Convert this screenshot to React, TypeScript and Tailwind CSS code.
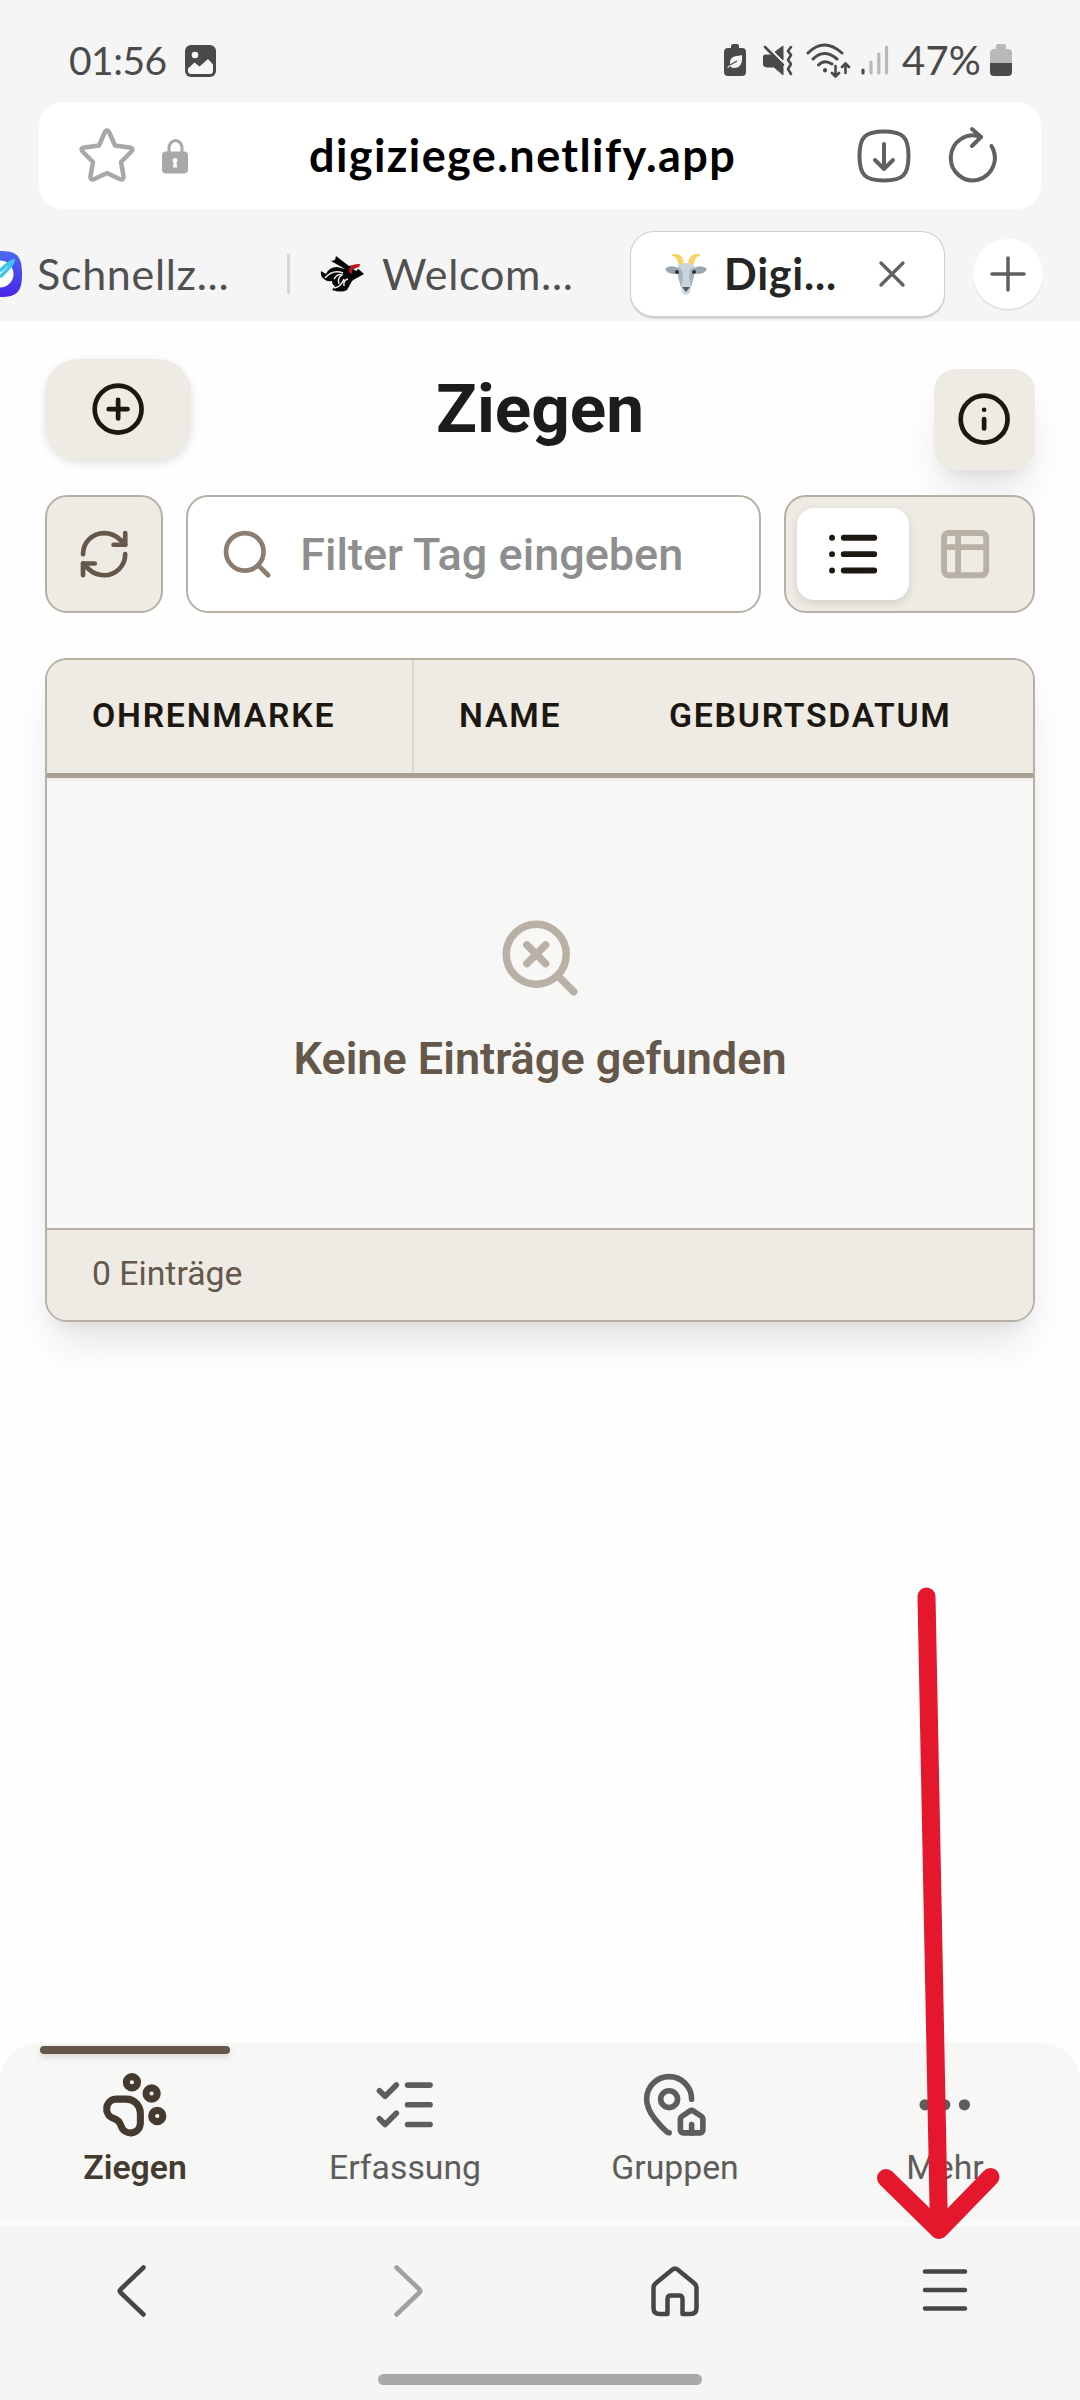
import { useState } from 'react';
import {
  CirclePlus,
  Ellipsis,
  Info,
  List,
  ListChecks,
  MapPinHouse,
  PawPrint,
  RefreshCw,
  Search,
  SearchX,
} from 'lucide-react';

function StatusBar() {
  return (
    <div className="h-[102px] pl-[69px] pr-[68px] pt-[18px] flex items-center justify-between text-[#4a4a4a]">
      <div className="flex items-center">
        <span className="w-[116px] text-[39px] leading-none tracking-[-0.5px]">01:56</span>
        <svg width="31" height="32" viewBox="0 0 31 32" className="mt-0.5">
          <rect width="31" height="32" rx="6" fill="#4a4a4a" />
          <circle cx="10" cy="10" r="3.3" fill="#f6f6f6" />
          <path d="M3 23.500 9.500 17.500l5 4L23 14l5 5.500V26q0 3-3 3H6q-3 0-3-3z" fill="#f6f6f6" />
        </svg>
      </div>

      <div className="flex items-center">
        {/* Power saving */}
        <svg width="22" height="33" viewBox="0 0 22 33" className="mr-[17px]">
          <path d="M7 2q0-2 2-2h4q2 0 2 2v2h3q4 0 4 4v20q0 4-4 4H4q-4 0-4-4V8q0-4 4-4h3z" fill="#4a4a4a" />
          <path d="M18 11q1 13-8 13-3 0-4-2-1 2-3 2 1-2 3-3-1-8 6-9 3 0 6-1z" fill="#f6f6f6" />
          <path d="M6 21l7-4" stroke="#4a4a4a" strokeWidth="1.300" fill="none" />
        </svg>
        {/* Muted / vibrate */}
        <svg width="30" height="33" viewBox="0 0 30 33" className="mr-[13px]">
          <path d="M2 11h6L20 23v8l-9-8H4q-4 0-4-4v-5q0-3 2-3zM20 2v14l-8-8z" fill="#4a4a4a" stroke="#4a4a4a" strokeLinejoin="round" />
          <path d="M2 3l18 18" stroke="#4a4a4a" strokeWidth="2.600" strokeLinecap="round" />
          <path d="M28 3l-3 4 3 4-3 5 3 4-3 5 3 5" stroke="#4a4a4a" strokeWidth="2.600" fill="none" strokeLinecap="round" strokeLinejoin="round" />
        </svg>
        {/* Wifi with traffic arrows */}
        <svg width="45" height="35" viewBox="0 0 45 35" className="mr-[10px]" fill="none" stroke="#4a4a4a" strokeWidth="3" strokeLinecap="round" strokeLinejoin="round">
          <path d="M2 10Q18-6 36 10M7 16Q18 5 31 16M12.500 22Q18 16 26 21" />
          <path d="M19 27v.4" strokeWidth="4" />
          <path d="M29.500 23v10M26 30l3.500 3.500L33 30M39.500 30V21M36 24l3.500-3.500L43 24" strokeWidth="2.600" />
        </svg>
        {/* Signal */}
        <svg width="28" height="32" viewBox="0 0 28 32" className="mr-[13px]" strokeWidth="3.200" strokeLinecap="round">
          <path d="M2 26v3" stroke="#4a4a4a" />
          <path d="M10 18v11M17.800 10v19M25.500 3v26" stroke="#b9b9b9" />
        </svg>
        <span className="w-[84px] text-[40px] leading-none tracking-[0.2px] whitespace-nowrap">47%</span>
        <svg width="22" height="33" viewBox="0 0 22 33" className="ml-[4px]">
          <path d="M6 2q0-2 2-2h6q2 0 2 2v3h2q4 0 4 4v10H0V9q0-4 4-4h2z" fill="#b9b9b9" />
          <path d="M0 19h22v9q0 4-4 4H4q-4 0-4-4z" fill="#4a4a4a" />
        </svg>
      </div>
    </div>
  );
}

function AddressBar() {
  return (
    <div className="mx-[39px] h-[107px] rounded-[24px] bg-white flex items-center pl-[40px] pr-[41px]">
      <svg width="56" height="56" viewBox="0 0 56 56" fill="none" stroke="#a8a8a8" strokeWidth="4.500" strokeLinejoin="round">
        <path d="M25.500 5q2.500-5 5 0l5.500 12.500 14.500 2q5 1 1.500 4.500L42 34l2.500 14q.5 5-4 3L28 45l-12.500 6q-4.500 2-4-3L14 34 4 24q-3.500-3.500 1.500-4.500l14.500-2z" />
      </svg>
      <svg width="27" height="36" viewBox="0 0 27 36" className="ml-[27px]">
        <path d="M7 15V10a6.500 7.500 0 0 1 13 0v5" fill="none" stroke="#a8a8a8" strokeWidth="3" />
        <rect y="13.500" width="26" height="22" rx="4" fill="#a8a8a8" />
        <path d="M13 20a2.500 2.500 0 0 1 1.500 4.500l.5 5h-4l.5-5A2.500 2.500 0 0 1 13 20z" fill="#fff" />
      </svg>
      <span className="ml-[120px] w-[548px] text-[45px] leading-none font-bold tracking-[1.4px] text-black whitespace-nowrap">
        digiziege.netlify.app
      </span>
      <svg width="54" height="54" viewBox="0 0 54 54" fill="none" stroke="#606062" strokeWidth="4" strokeLinecap="round" strokeLinejoin="round">
        <path d="M27 2.500C46 2.500 51.500 8 51.500 27S46 51.500 27 51.500 2.500 46 2.500 27 8 2.500 27 2.500z" />
        <path d="M27 15v25M18 31l9 9 9-9" />
      </svg>
      <svg width="52" height="60" viewBox="0 0 52 60" className="ml-auto mb-[4px]" fill="none" stroke="#606062" strokeWidth="4" strokeLinecap="round" strokeLinejoin="round">
        <path d="M43.500 22A22 22.500 0 1 1 33 13" />
        <path d="M24 5l9 8-9 9" />
      </svg>
    </div>
  );
}

function GoatIcon() {
  return (
    <svg width="42" height="44" viewBox="0 0 42 44" className="absolute left-[34px] top-[20px]">
      <path d="M18 11Q17 1 7 3q6 1 7 9zM24 11Q25 1 35 3q-6 1-7 9z" fill="#f6d465" stroke="#f6d465" strokeWidth="1.500" />
      <path d="M14 16Q4 12 0 17q4 7 13 4zM28 16q10-4 14 1-4 7-13 4z" fill="#9aa7af" />
      <path d="M13 13q8-4 16 0l-1 14-3 13q-4 6-8 0l-3-13z" fill="#c9d5dc" />
      <path d="M13 15l4 3 1 8-2 9-3-10zM29 15l-4 3-1 8 2 9 3-10z" fill="#a7b5c2" />
      <circle cx="12" cy="20" r="2" fill="#2b2f3a" />
      <circle cx="29" cy="20" r="2" fill="#2b2f3a" />
      <path d="M17 35h8l-4 5z" fill="#4e5d6b" />
    </svg>
  );
}

function TabStrip() {
  return (
    <div className="h-[112px] pt-[22px] flex items-start text-[43px] tracking-[0.7px] text-[#505050] whitespace-nowrap">
      <div className="h-[86px] w-[287px] flex items-center">
        <svg width="22" height="46" viewBox="0 0 22 46">
          <defs>
            <linearGradient id="start" x1="0" y1="0" x2="0" y2="1">
              <stop offset="0" stopColor="#4a6cf0" />
              <stop offset="1" stopColor="#4a23e8" />
            </linearGradient>
          </defs>
          <path d="M0 0C17 0 22 5 22 23S17 46 0 46z" fill="url(#start)" />
          <circle cx="0" cy="23" r="13.500" fill="#fff" />
          <path d="M0 20Q9 11 13 10q-1 5-13 16" fill="#fff" stroke="#3cc5f0" strokeWidth="3.500" />
        </svg>
        <span className="ml-[15px]">Schnellz...</span>
      </div>
      <div className="w-[3px] h-10 mt-[23px] bg-[#d6d6d6]" />
      <div className="h-[86px] w-[340px] pl-[30px] flex items-center">
        <svg width="46" height="38" viewBox="0 0 46 38">
          <path d="M11 6l4-1 1-4 13 10 5-1 10 9-9 5-3 2-5 9q-5 3-15 0l3-4q-3-1-3-5-5 1-8-2-4-3-3-8l5 3q3-7 11-7l8 2z" fill="#050505" />
          <path d="M5 23q8-9 18-5M14 24q4-6 8-4-5 3-3 9M14 33q7-1 10-9M24 31q-1-6 4-7" stroke="#f0f0f0" strokeWidth="1.400" fill="none" />
          <path d="M29 17q0-9 11-8l-1 4q-8-2-7 6z" fill="#c4161c" />
          <path d="M33 14l7-2-4 4z" fill="#fff" />
        </svg>
        <span className="ml-[16px]">Welcom...</span>
      </div>
      <div className="relative h-[87px] w-[315px] rounded-[24px] border border-[#cfcfcf] border-b-2 bg-white shadow-[0_1px_1px_rgba(0,0,0,0.1)] flex items-center pl-[93px] pr-[39px]">
        <GoatIcon />
        <span className="font-bold tracking-[0.8px] text-[#252525]">Digi...</span>
        <svg width="26" height="26" viewBox="0 0 26 26" className="ml-auto" stroke="#606062" strokeWidth="3.200" strokeLinecap="round">
          <path d="M2 2l22 22M24 2L2 24" />
        </svg>
      </div>
      <div className="ml-[28px] mt-[8px] w-[70px] h-[70px] rounded-full bg-white shadow-[0_2px_1px_rgba(0,0,0,0.08)] flex items-center justify-center">
        <svg width="36" height="36" viewBox="0 0 36 36" stroke="#606062" strokeWidth="3.500" strokeLinecap="round">
          <path d="M18 2v32M2 18h32" />
        </svg>
      </div>
    </div>
  );
}

function PageHeader() {
  return (
    <div className="grid grid-cols-3 items-start">
      <button className="w-[146px] h-[101px] rounded-[34px] bg-[#eeebe4] text-[#1c1710] shadow-[0_3px_8px_rgba(0,0,0,0.12)] flex items-center justify-center">
        <CirclePlus size={56.25} />
      </button>
      <h1 className="h-[101px] leading-[99px] text-center text-[67.5px] font-bold text-[#1c1c1c]">Ziegen</h1>
      <button className="justify-self-end mt-[10px] w-[101px] h-[101px] rounded-[22px] bg-[#eeebe4] text-[#1c1710] shadow-[0_28px_42px_-8px_rgba(0,0,0,0.1),0_11px_17px_-11px_rgba(0,0,0,0.1)] flex items-center justify-center">
        <Info size={56.25} />
      </button>
    </div>
  );
}

function Toolbar() {
  const [filter, setFilter] = useState('');

  return (
    <div className="mt-[25px] h-[118px] flex gap-[23px]">
      <button className="w-[118px] rounded-[22px] border-2 border-[#b8b0a4] bg-[#eeebe4] text-[#65574a] flex items-center justify-center">
        <RefreshCw size={56.25} />
      </button>
      <div className="flex-1 min-w-0 rounded-[22px] border-2 border-[#b8b0a4] bg-white flex items-center pl-[31px] gap-[25px]">
        <Search size={56.25} className="shrink-0 text-[#8b7d70]" />
        <input
          value={filter}
          onChange={(e) => setFilter(e.target.value)}
          placeholder="Filter Tag eingeben"
          className="min-w-0 flex-1 pt-[2px] text-[45px] font-medium text-[#1c1c1c] placeholder:text-[#8e8e8e] focus:outline-none"
        />
      </div>
      <div className="w-[251px] rounded-[22px] border-2 border-[#b8b0a4] bg-[#eeebe4] p-[11px] flex">
        <button className="h-[92px] w-[112px] rounded-[17px] bg-white text-[#1c1710] shadow-[0_3px_8px_rgba(0,0,0,0.12)] flex items-center justify-center">
          <List size={56.25} strokeWidth={2.5} />
        </button>
        <button className="h-[92px] w-[112px] text-[#bab1a6] flex items-center justify-center">
          <svg width="56.25" height="56.25" viewBox="0 0 24 24" fill="none" stroke="currentColor" strokeWidth="2.500">
            <rect x="3" y="3" width="18" height="18" rx="2" />
            <path d="M3 9h18M9 3v18" />
          </svg>
        </button>
      </div>
    </div>
  );
}

function GoatTable() {
  return (
    <div className="mt-[45px] h-[664px] rounded-[22px] border-2 border-[#b8b0a4] bg-[#f7f7f5] overflow-hidden shadow-[0_28px_42px_-8px_rgba(0,0,0,0.1),0_11px_17px_-11px_rgba(0,0,0,0.1)] flex flex-col">
      <div className="h-[118px] shrink-0 border-b-[5px] border-[#a9a093] bg-[#eeebe4] shadow-[0_2px_4px_rgba(0,0,0,0.06)] flex text-[33.75px] leading-[111px] font-semibold tracking-[1.75px] text-[#1c1710]">
        <div className="w-[367px] pl-[45px] border-r-2 border-[#dbd7cf]">OHRENMARKE</div>
        <div className="w-[210px] pl-[45px]">NAME</div>
        <div className="flex-1 pl-[45px]">GEBURTSDATUM</div>
      </div>
      <div className="flex-1 flex flex-col items-center pt-[135px] text-[#65574a]">
        <SearchX size={90} className="text-[#bab1a6]" />
        <p className="mt-[22px] text-[45px] leading-[67px] font-semibold">Keine Einträge gefunden</p>
      </div>
      <div className="h-[92px] border-t-2 border-[#b8b0a4] bg-[#eeebe4] pl-[45px] text-[33.75px] leading-[87px] text-[#65574a]">
        0 Einträge
      </div>
    </div>
  );
}

const navItems = [
  { label: 'Ziegen', icon: PawPrint, active: true },
  { label: 'Erfassung', icon: ListChecks, active: false },
  { label: 'Gruppen', icon: MapPinHouse, active: false },
  { label: 'Mehr', icon: Ellipsis, active: false },
];

function BottomNav() {
  return (
    <nav className="h-[180px] rounded-t-[38px] bg-[#f7f7f5] grid grid-cols-4">
      {navItems.map(({ label, icon: Icon, active }) => (
        <div
          key={label}
          className={
            active
              ? 'relative flex flex-col items-center pt-[28px] text-[#443a2f] font-semibold'
              : 'relative flex flex-col items-center pt-[28px] text-[#5d5d5b]'
          }
        >
          {active && (
            <span className="absolute top-[3px] left-[40px] w-[190px] h-2 rounded-full bg-[#65574a] shadow-[0_3px_6px_rgba(101,87,74,0.2)]" />
          )}
          <Icon size={67.5} strokeWidth={active ? 2.5 : 2} />
          <span className="mt-[5px] text-[33.75px] leading-[48px]">{label}</span>
        </div>
      ))}
    </nav>
  );
}

function BrowserBar() {
  return (
    <div className="h-[177px] border-t-[3px] border-[#fdfdfd] bg-[#f5f5f5]">
      <div className="h-[130px] grid grid-cols-4 place-items-center text-[#464646]">
        <svg width="56" height="56" viewBox="0 0 56 56" fill="none" stroke="currentColor" strokeWidth="4.500" strokeLinecap="round" strokeLinejoin="round">
          <path d="M36.500 4.500L13.500 26.500q-1.500 1.500 0 3L36.500 51.500" />
        </svg>
        <svg width="56" height="56" viewBox="0 0 56 56" fill="none" stroke="#a0a0a0" strokeWidth="4.500" strokeLinecap="round" strokeLinejoin="round">
          <path d="M19.500 4.500L42.500 26.500q1.500 1.500 0 3L19.500 51.500" />
        </svg>
        <svg width="56" height="56" viewBox="0 0 56 56" fill="none" stroke="currentColor" strokeWidth="4.500" strokeLinejoin="round">
          <path d="M25.500 6.500q2.500-2 5 0L47 20q2.500 2 2.500 5v20q0 6-6 6H35.500V36q0-3.500-3.500-3.500h-8q-3.500 0-3.500 3.500v15H12.500q-6 0-6-6V25q0-3 2.500-5z" />
        </svg>
        <svg width="56" height="56" viewBox="0 0 56 56" fill="none" stroke="currentColor" strokeWidth="4.500" strokeLinecap="round">
          <path d="M8 8.500h40M8 27h40M8 45.500h40" />
        </svg>
      </div>
      <div className="mx-auto mt-[18px] w-[324px] h-[11px] rounded-full bg-[#a9a9a9]" />
    </div>
  );
}

export default function App() {
  return (
    <div className="relative w-[1080px] h-[2400px] overflow-hidden bg-[#fefefe] flex flex-col font-['Roboto','Liberation_Sans',sans-serif]">
      <div className="bg-[#f5f5f5] font-['Lato','Open_Sans',sans-serif]">
        <StatusBar />
        <AddressBar />
        <TabStrip />
      </div>

      <main className="flex-1 px-[45px] pt-[38px]">
        <PageHeader />
        <Toolbar />
        <GoatTable />
      </main>

      <BottomNav />
      <BrowserBar />

      {/* Pointer to the browser menu */}
      <svg
        width="130"
        height="670"
        viewBox="0 0 130 670"
        className="absolute left-[870px] top-[1580px] pointer-events-none"
        fill="none"
        stroke="#e5172c"
        strokeWidth="18"
        strokeLinecap="round"
        strokeLinejoin="round"
      >
        <path d="M56.500 16.500L69 650M16 598L69 650L120.500 597" />
      </svg>
    </div>
  );
}
